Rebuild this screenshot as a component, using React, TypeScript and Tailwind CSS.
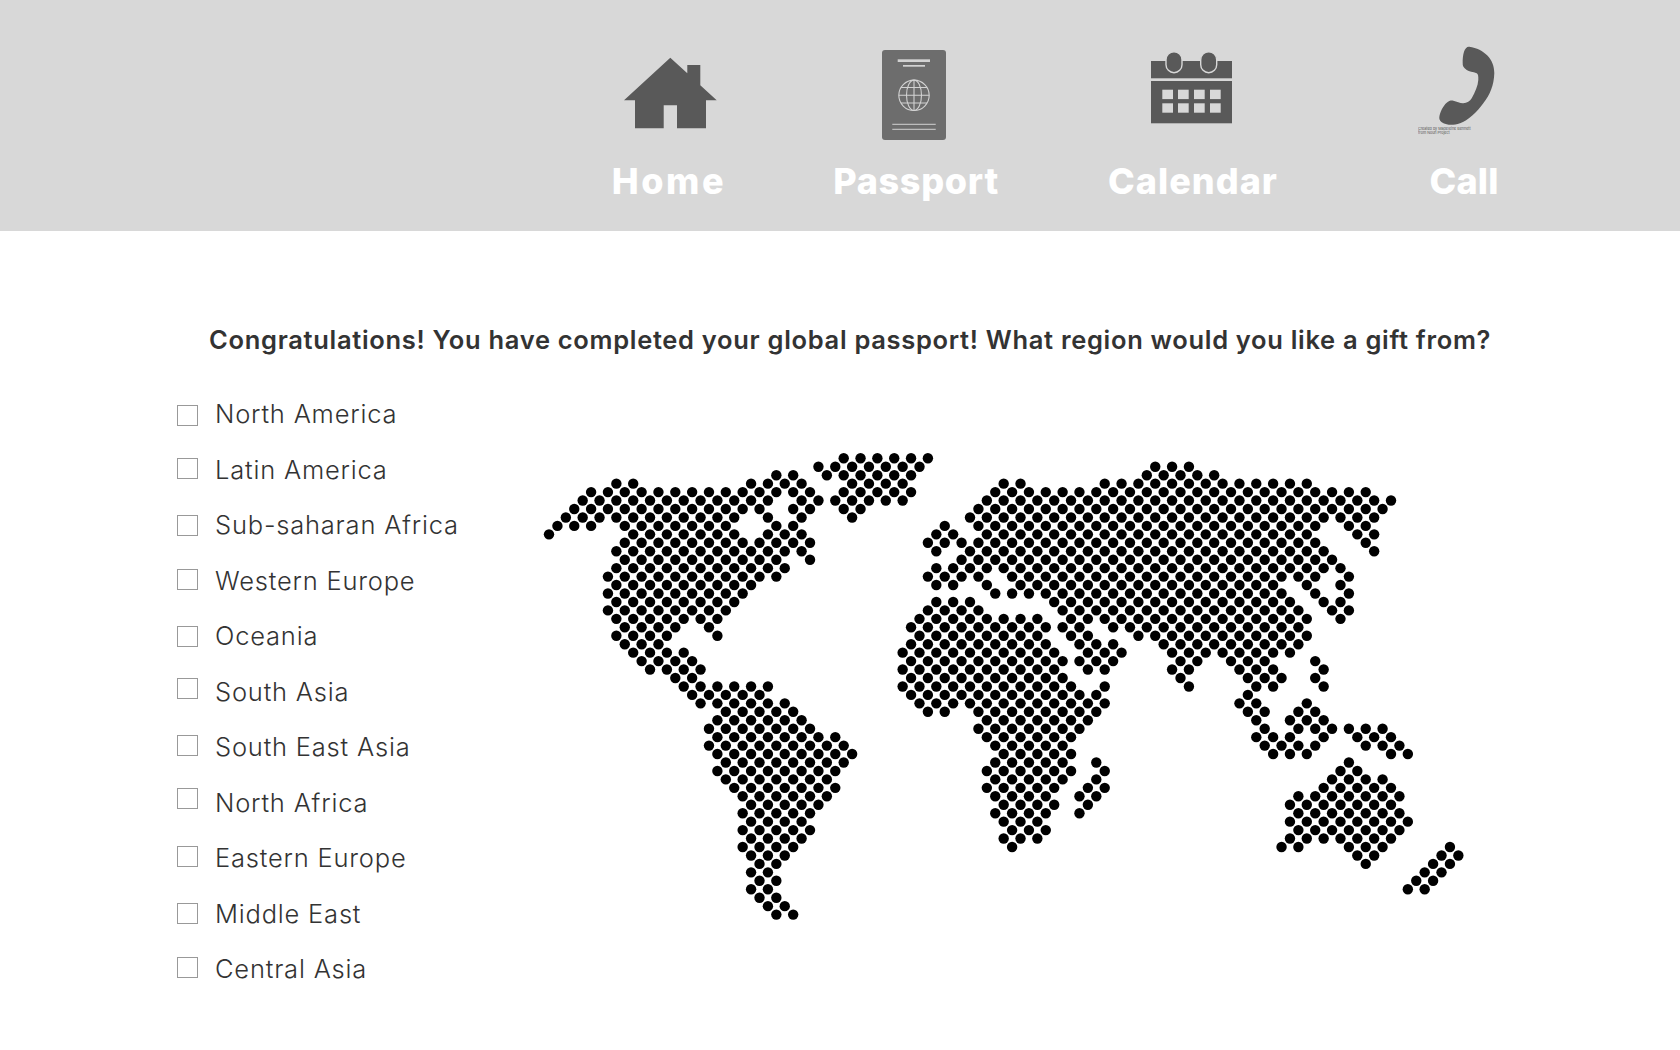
import React from "react";

// dot map: index = row, values are column ranges, "a-b" walks by 2 (hex lattice)
const mapRows = [
  "35-45",
  "32-44,72-76",
  "27,29,33-43,71-79",
  "8,10,24-30,36-42,54,56,66-90",
  "5-31,35-43,53-97",
  "4-26,30-42,52-100",
  "3-25,29,31,35,37,51-99",
  "2-22,26,30,36,50-98",
  "1,3,5,9-21,27,29,47,51-91,95,97",
  "0,10-22,26-30,46,48,52-90,96,98",
  "9-31,45-91,97",
  "8-30,46,50-92,98",
  "9-27,31,49-93",
  "8-28,46-94",
  "7-27,45-51,55-91,95",
  "8-24,46,48,52,56-86,90,94",
  "7-23,53-87,91,95",
  "8-22,46-50,60-88,92,94",
  "7-21,45-51,61-89,93,95",
  "8-20,44-58,62-90,94",
  "9-15,19,43-63,67-89",
  "8-14,20,44-58,62,64,70-90",
  "9-13,43-59,63-67,73-89",
  "10-16,42-60,64-68,74-88",
  "11-17,43-67,75,77,81-85,91",
  "12-18,42-60,64,66,74,76,82-86,92",
  "15,17,43-61,75,83-87,91",
  "16-26,42-62,66,76,84,86,92",
  "17-25,43-65,83",
  "18-28,44-66,82,84,90",
  "21-29,45,47,51-65,83,85,89,91",
  "20-30,52-64,84,88-92",
  "19-31,51-63,85,89-93,95-99",
  "20-34,52-62,84-88,92,96-100",
  "19-35,53-61,85-91,97-101",
  "20-36,54-62,86-90,100,102",
  "21-35,53-61,65,95",
  "20-34,52-62,66,94,96",
  "21-33,53-61,65,93-99",
  "22-34,52-60,64,66,92-100",
  "23-33,53-59,63,65,89-101",
  "24-32,54-60,64,88-100",
  "23-31,53-59,63,89-101",
  "24-30,54-58,88-102",
  "23-31,55-59,89-101",
  "24-30,54-58,88-100",
  "23-29,55,87,89,95-99,107",
  "24-28,96,98,106,108",
  "25,27,97,105,107",
  "24,26,104,106",
  "25,27,103,105",
  "24,26,102,104",
  "25,27",
  "26,28",
  "27,29",
];

const regions = [
  { name: "North America", box: "mt-[4px]" },
  { name: "Latin America", box: "-mt-[1px]" },
  { name: "Sub-saharan Africa", box: "mt-[1px]" },
  { name: "Western Europe", box: "-mt-[2px]" },
  { name: "Oceania", box: "mt-[1px]" },
  { name: "South Asia", box: "-mt-[5px]" },
  { name: "South East Asia", box: "-mt-[2px]" },
  { name: "North Africa", box: "-mt-[7px]" },
  { name: "Eastern Europe", box: "-mt-[2px]" },
  { name: "Middle East", box: "mt-0" },
  { name: "Central Asia", box: "-mt-[2px]" },
];

function WorldMap() {
  const dots: { x: number; y: number }[] = [];
  mapRows.forEach((row, r) => {
    row.split(",").forEach((part) => {
      const [a, b] = part.split("-").map(Number);
      for (let c = a; c <= (b ?? a); c += 2) {
        dots.push({ x: 9 + c * 8.42, y: 8.3 + r * 8.45 });
      }
    });
  });
  return (
    <svg width="930" height="480" viewBox="0 0 930 480" className="mt-[64px] shrink-0">
      <filter id="soft">
        <feGaussianBlur stdDeviation="0.55" />
      </filter>
      <g filter="url(#soft)" fill="#000">
        {dots.map((d, i) => (
          <circle key={i} cx={d.x} cy={d.y} r="5.2" />
        ))}
      </g>
    </svg>
  );
}

function HouseIcon() {
  return (
    <svg width="93" height="96" viewBox="0 0 93 96">
      <path
        d="M46.3 11.7L63.3 27.3V19H76.3V39.2L92.7 54.3H82V82.3H53V59.3H39.7V82.3H11V54.3H0Z"
        fill="#595959"
      />
    </svg>
  );
}

function PassportIcon() {
  return (
    <svg width="64" height="96" viewBox="0 0 64 96">
      <rect x="0" y="4" width="64" height="90" rx="3" fill="#6d6d6d" />
      <g fill="#d2d2d2">
        <rect x="15.7" y="13.3" width="32.3" height="2.7" />
        <rect x="21" y="19" width="22" height="1.7" />
        <rect x="10.3" y="77.8" width="43.4" height="1" />
        <rect x="10.3" y="82.8" width="43.4" height="1" />
      </g>
      <g fill="none" stroke="#d2d2d2" strokeWidth="1.1">
        <circle cx="32" cy="49.3" r="15.2" />
        <ellipse cx="32" cy="49.3" rx="7.5" ry="15.2" />
        <path d="M32 34.1V64.5M16.8 49.3H47.2M19 41.5H45M19 57H45" />
      </g>
    </svg>
  );
}

function CalendarIcon() {
  return (
    <svg width="83" height="96" viewBox="0 0 83 96">
      <rect x="1" y="15" width="81" height="17.3" fill="#595959" />
      <rect x="1" y="35" width="81" height="42.3" fill="#595959" />
      <rect x="16" y="5.7" width="16" height="21" rx="8" fill="#595959" stroke="#d8d8d8" strokeWidth="1.4" />
      <rect x="50.7" y="5.7" width="16" height="21" rx="8" fill="#595959" stroke="#d8d8d8" strokeWidth="1.4" />
      <g fill="#d8d8d8">
        {[12.3, 28, 44, 60].flatMap((x) =>
          [43.7, 57.3].map((y) => <rect key={`${x}-${y}`} x={x} y={y} width="10.7" height="9.4" />)
        )}
      </g>
    </svg>
  );
}

function PhoneIcon() {
  return (
    <svg width="77" height="96" viewBox="0 0 77 96">
      <path
        d="M51.3 .7C66 3 76.6 13 76.3 27.3C76 39 72 49 65.3 57.3C59 66 50 74.5 42 77.3C37 79 32 79.3 28.7 78.3C24 77 21 75 21.3 71.3C22 66 25 60 28.7 56.7C31 54.8 33 54.3 35.3 54.7C39 55.3 42 57.5 45.3 57.3C49 57 52 55 53.7 52.3C57 46 60 40 60.3 34C60.5 30 60 28 58.7 27.3C55 25.5 51 26 48.7 24C45.5 21.5 44.5 20 44.7 17.3C44.5 13 45 9 46 5.7C47 2.5 49 .4 51.3 .7Z"
        fill="#595959"
      />
      <text x="0" y="83.9" fontSize="3.7" fill="#555" fontFamily="Inter, sans-serif">
        Created by Madeleine Bennett
      </text>
      <text x="0" y="87.5" fontSize="3.7" fill="#555" fontFamily="Inter, sans-serif">
        from Noun Project
      </text>
    </svg>
  );
}

function NavItem({
  label,
  className,
  iconClass,
  labelClass,
  children,
}: {
  label: string;
  className?: string;
  iconClass: string;
  labelClass: string;
  children: React.ReactNode;
}) {
  return (
    <div className={`flex flex-col items-center w-[240px] shrink-0 ${className ?? ""}`}>
      <div className={`h-[96px] ${iconClass}`}>{children}</div>
      <span className={`mt-[18px] text-[36px] leading-[42px] font-extrabold text-white ${labelClass}`}>{label}</span>
    </div>
  );
}

export default function App() {
  return (
    <div className="w-full min-h-screen bg-white font-[Inter,sans-serif] text-[#333]">
      <header className="flex h-[231px] bg-[#d8d8d8] pt-[46px] pl-[549px]">
        <NavItem label="Home" iconClass="ml-[2px]" labelClass="tracking-[2.6px]">
          <HouseIcon />
        </NavItem>
        <NavItem label="Passport" className="ml-[7px]" iconClass="mr-[4px]" labelClass="tracking-[0.7px]">
          <PassportIcon />
        </NavItem>
        <NavItem label="Calendar" className="ml-[37px]" iconClass="mr-[4px]" labelClass="tracking-[1px]">
          <CalendarIcon />
        </NavItem>
        <NavItem label="Call" className="ml-[31px]" iconClass="mr-[15px]" labelClass="tracking-[0.2px]">
          <PhoneIcon />
        </NavItem>
      </header>

      <main className="pl-[177px]">
        <h1 className="mt-[93px] ml-[32px] text-[25.5px] leading-[32px] font-semibold tracking-[0.69px] whitespace-nowrap">
          Congratulations! You have completed your global passport! What region would you like a gift from?
        </h1>

        <div className="flex mt-[30px]">
          <ul className="w-[363px] shrink-0">
            {regions.map((region) => (
              <li key={region.name} className="flex items-center h-[55.5px]">
                <span className={`w-[21px] h-[21px] border border-[#999] shrink-0 ${region.box}`} />
                <span className="ml-[17px] mt-[1px] text-[25.5px] font-light tracking-[0.8px] whitespace-nowrap">
                  {region.name}
                </span>
              </li>
            ))}
          </ul>
          <WorldMap />
        </div>
      </main>
    </div>
  );
}
